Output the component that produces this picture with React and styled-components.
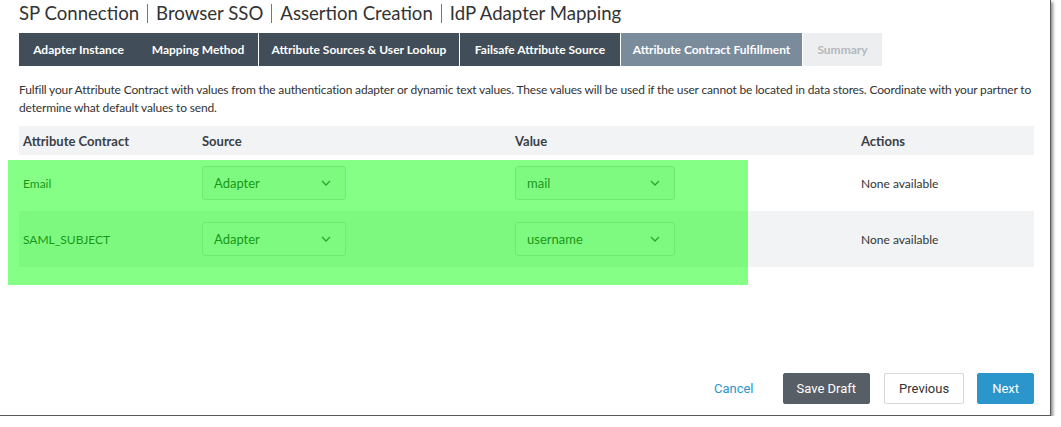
import React from 'react'
import styled, { createGlobalStyle } from 'styled-components'

const Global = createGlobalStyle`
  html, body { margin: 0; padding: 0; background: #fff; }
  body { font-family: Lato, "Open Sans", sans-serif; color: #333; }
`

const Frame = styled.div`
  position: relative;
  width: 1051px;
  height: 416px;
  box-sizing: border-box;
  background: #fff;
  border-right: 1px solid #5a5a5a;
  border-bottom: 1px solid #5a5a5a;
  box-shadow: 2px 2px 3px rgba(0, 0, 0, 0.45);
  padding: 0 16px 0 19px;
  display: flex;
  flex-direction: column;
`

const Title = styled.h1`
  margin: 1px 0 0;
  font-size: 18.6px;
  font-weight: 400;
  line-height: 24px;
  color: #333;
  white-space: nowrap;
`

const Sep = styled.span`
  display: inline-block;
  width: 1px;
  height: 19px;
  background: #777;
  margin: 0 8px;
  vertical-align: -3px;
`

const Tabs = styled.div`
  display: flex;
  margin-top: 8px;
  height: 33px;
`

const Tab = styled.div`
  width: ${p => p.w}px;
  display: flex;
  align-items: center;
  justify-content: center;
  font-size: 12px;
  font-weight: 700;
  box-sizing: border-box;
  background: ${p => (p.state === 'active' ? '#7a8b9c' : p.state === 'todo' ? '#eceef0' : '#414d58')};
  color: ${p => (p.state === 'todo' ? '#b4b8bc' : '#fff')};
  border-left: ${p => (p.split ? '1px solid #fff' : 'none')};
`

const Desc = styled.p`
  margin: 15px 0 0;
  font-size: 12px;
  line-height: 18px;
  letter-spacing: -0.16px;
  white-space: nowrap;
  color: #333;
`

const Table = styled.div`
  margin-top: 9px;
  width: 1015px;
`

const Row = styled.div`
  display: grid;
  grid-template-columns: 179px 313px 346px 1fr;
  height: ${p => (p.head ? 29 : 56)}px;
  align-items: center;
  background: ${p => (p.shade ? '#f2f3f5' : '#fff')};
  font-size: ${p => (p.head ? 13 : 12)}px;
  font-weight: ${p => (p.head ? 700 : 400)};
  color: ${p => (p.head ? '#3a3f45' : '#333')};
`

const Cell = styled.div`
  padding-left: 4px;
`

const Select = styled.div`
  width: ${p => p.w}px;
  height: 34px;
  box-sizing: border-box;
  border: 1px solid #d4d7db;
  border-radius: 3px;
  background: #f4f5f7;
  display: flex;
  align-items: center;
  justify-content: space-between;
  padding: 0 14px 0 11px;
  font-size: 13px;
  color: #333;
`

const Chevron = () => (
  <svg width="10" height="6" viewBox="0 0 10 6">
    <path d="M1 1l4 4 4-4" fill="none" stroke="#555" strokeWidth="1.3" />
  </svg>
)

const Footer = styled.div`
  margin-top: auto;
  margin-bottom: 11px;
  width: 1015px;
  display: flex;
  justify-content: flex-end;
  align-items: center;
  font-family: Roboto, "Open Sans", sans-serif;
`

const LinkBtn = styled.span`
  color: #2996cc;
  font-size: 13px;
  margin-right: 29px;
`

const Button = styled.div`
  height: 31px;
  box-sizing: border-box;
  padding: 0 ${p => p.px}px;
  margin-left: ${p => p.ml}px;
  display: flex;
  align-items: center;
  border-radius: 2px;
  font-size: 13px;
  background: ${p => p.bg};
  color: ${p => p.fg};
  border: 1px solid ${p => p.bd};
`

const Highlight = styled.div`
  position: absolute;
  left: 8px;
  top: 160px;
  width: 740px;
  height: 125px;
  background: rgba(0, 255, 0, 0.48);
  pointer-events: none;
`

const rows = [
  { name: 'Email', source: 'Adapter', value: 'mail' },
  { name: 'SAML_SUBJECT', source: 'Adapter', value: 'username' },
]

export default function App() {
  return (
    <>
      <Global />
      <Frame>
        <Title>
          SP Connection<Sep />Browser SSO<Sep />Assertion Creation<Sep />IdP Adapter Mapping
        </Title>
        <Tabs>
          <Tab w={119}>Adapter Instance</Tab>
          <Tab w={120}>Mapping Method</Tab>
          <Tab w={201} split>Attribute Sources &amp; User Lookup</Tab>
          <Tab w={161} split>Failsafe Attribute Source</Tab>
          <Tab w={182} split state="active">Attribute Contract Fulfillment</Tab>
          <Tab w={80} split state="todo">Summary</Tab>
        </Tabs>
        <Desc>
          Fulfill your Attribute Contract with values from the authentication adapter or dynamic text values. These values will be used if the user cannot be located in data stores. Coordinate with your partner to<br />
          determine what default values to send.
        </Desc>
        <Table>
          <Row head shade>
            <Cell>Attribute Contract</Cell>
            <Cell>Source</Cell>
            <Cell>Value</Cell>
            <Cell>Actions</Cell>
          </Row>
          {rows.map((r, i) => (
            <Row key={r.name} shade={i % 2 === 1}>
              <Cell>{r.name}</Cell>
              <Cell>
                <Select w={144}>{r.source}<Chevron /></Select>
              </Cell>
              <Cell>
                <Select w={160}>{r.value}<Chevron /></Select>
              </Cell>
              <Cell>None available</Cell>
            </Row>
          ))}
        </Table>
        <Footer>
          <LinkBtn>Cancel</LinkBtn>
          <Button px={13} ml={0} bg="#575e66" fg="#fff" bd="#575e66">Save Draft</Button>
          <Button px={14} ml={14} bg="#fff" fg="#333" bd="#d8d8d8">Previous</Button>
          <Button px={14} ml={13} bg="#2a96cc" fg="#fff" bd="#2a96cc">Next</Button>
        </Footer>
        <Highlight />
      </Frame>
    </>
  )
}
